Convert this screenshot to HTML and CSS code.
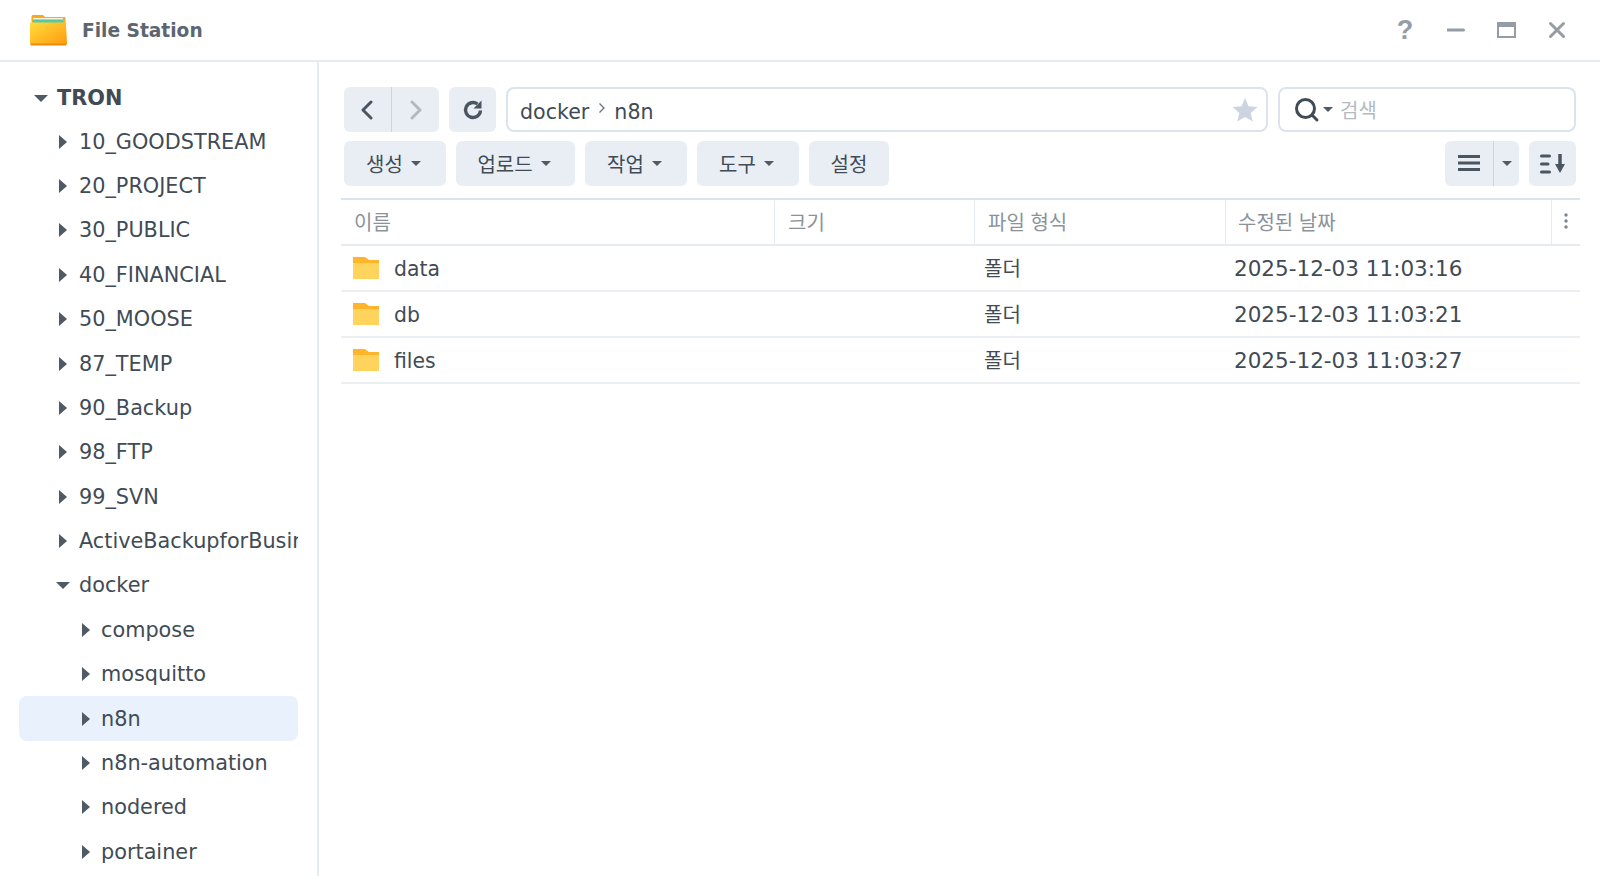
FILE: index.html
```html
<!DOCTYPE html>
<html lang="ko">
<head>
<meta charset="utf-8">
<title>File Station</title>
<link rel="stylesheet" href="styles.css">
</head>
<body>
<div class="window">
  <header class="titlebar">
    <svg class="app-icon" width="40" height="34" viewBox="0 0 40 34">
      <defs>
        <linearGradient id="fg" x1="0" y1="0" x2="1" y2="1"><stop offset="0" stop-color="#ffdc3c"/><stop offset="1" stop-color="#ff9a10"/></linearGradient>
      </defs>
      <path d="M2.500 3.500a1.500 1.500 0 0 1 1.500-1.500h10l2 2h19.500a1 1 0 0 1 1 1v6h-34z" fill="#f7a823"/>
      <rect x="4" y="5" width="30" height="1.600" fill="#fff6d8"/>
      <rect x="4" y="6.600" width="30" height="3.400" fill="#58c9a6"/>
      <path d="M1 10.500a1 1 0 0 1 1-1h34a1 1 0 0 1 1 1l1 19.500a2 2 0 0 1-2 2H3a2 2 0 0 1-2-2z" fill="url(#fg)"/>
      <rect x="1.500" y="30.500" width="36" height="1.500" fill="#e98b0d"/>
      <rect x="2" y="32" width="35" height="1" fill="#c9ccd0"/>
    </svg>
    <span class="app-title">File Station</span>
    <div class="win-controls">
      <span class="win-help">?</span>
      <svg width="20" height="20" viewBox="1 0 20 20"><rect x="0" y="8.500" width="19" height="3" rx="1.500" fill="#969ca5"/></svg>
      <svg width="20" height="20" viewBox="0 0 20 20"><path d="M1 3h17v14H1z" fill="none" stroke="#969ca5" stroke-width="2"/><rect x="1" y="2" width="17" height="5" fill="#969ca5"/></svg>
      <svg width="20" height="20" viewBox="0 0 20 20"><path d="M3.500 3.500l13 13M16.500 3.500l-13 13" stroke="#969ca5" stroke-width="3" stroke-linecap="round"/></svg>
    </div>
  </header>
  <div class="body">
    <aside class="sidebar">
      <div class="tree-row root"><i class="caret-down"></i><span class="tree-label">TRON</span></div>
      <div class="tree-row lvl1"><i class="caret-right"></i><span class="tree-label">10_GOODSTREAM</span></div>
      <div class="tree-row lvl1"><i class="caret-right"></i><span class="tree-label">20_PROJECT</span></div>
      <div class="tree-row lvl1"><i class="caret-right"></i><span class="tree-label">30_PUBLIC</span></div>
      <div class="tree-row lvl1"><i class="caret-right"></i><span class="tree-label">40_FINANCIAL</span></div>
      <div class="tree-row lvl1"><i class="caret-right"></i><span class="tree-label">50_MOOSE</span></div>
      <div class="tree-row lvl1"><i class="caret-right"></i><span class="tree-label">87_TEMP</span></div>
      <div class="tree-row lvl1"><i class="caret-right"></i><span class="tree-label">90_Backup</span></div>
      <div class="tree-row lvl1"><i class="caret-right"></i><span class="tree-label">98_FTP</span></div>
      <div class="tree-row lvl1"><i class="caret-right"></i><span class="tree-label">99_SVN</span></div>
      <div class="tree-row lvl1"><i class="caret-right"></i><span class="tree-label">ActiveBackupforBusiness</span></div>
      <div class="tree-row lvl1"><i class="caret-down"></i><span class="tree-label">docker</span></div>
      <div class="tree-row lvl2"><i class="caret-right"></i><span class="tree-label">compose</span></div>
      <div class="tree-row lvl2"><i class="caret-right"></i><span class="tree-label">mosquitto</span></div>
      <div class="tree-row lvl2 selected"><i class="caret-right"></i><span class="tree-label">n8n</span></div>
      <div class="tree-row lvl2"><i class="caret-right"></i><span class="tree-label">n8n-automation</span></div>
      <div class="tree-row lvl2"><i class="caret-right"></i><span class="tree-label">nodered</span></div>
      <div class="tree-row lvl2"><i class="caret-right"></i><span class="tree-label">portainer</span></div>
    </aside>
    <main class="content">
      <div class="nav-bar">
        <div class="btn-group nav-group">
          <button class="seg"><svg width="14" height="22" viewBox="1 0 14 22"><path d="M11 3L3 11l8 8" fill="none" stroke="#4a5560" stroke-width="3" stroke-linecap="round" stroke-linejoin="round"/></svg></button>
          <button class="seg"><svg width="14" height="22" viewBox="0 0 14 22"><path d="M3 3l8 8-8 8" fill="none" stroke="#b4b9bf" stroke-width="3" stroke-linecap="round" stroke-linejoin="round"/></svg></button>
        </div>
        <button class="btn refresh"><svg width="22" height="22" viewBox="0 0 22 22"><path d="M18.500 11.500A7.500 7.500 0 1 1 15.500 5" fill="none" stroke="#4a5560" stroke-width="3.400"/><path d="M19.500 1.500v8h-8z" fill="#4a5560"/></svg></button>
        <div class="path-box">
          <span class="crumb">docker</span>
          <svg class="crumb-sep" width="8" height="12" viewBox="0 0 8 12"><path d="M1.500 1.500L6 6l-4.500 4.500" fill="none" stroke="#6b7580" stroke-width="1.300"/></svg>
          <span class="crumb">n8n</span>
          <svg class="star" width="26" height="25" viewBox="0 0 26 25"><path d="M13 1l3.500 8.200 8.900.8-6.700 5.900 2 8.700L13 20.100l-7.700 4.500 2-8.700L.6 10l8.900-.8z" fill="#ccd5df"/></svg>
        </div>
        <div class="search-box">
          <svg width="26" height="26" viewBox="0 0 26 26"><circle cx="11.500" cy="11.500" r="9" fill="none" stroke="#414b55" stroke-width="3"/><path d="M18 18l5 5" stroke="#414b55" stroke-width="3" stroke-linecap="round"/></svg>
          <i class="caret-down small search-caret"></i>
          <span class="search-ph">검색</span>
        </div>
      </div>
      <div class="action-bar">
        <button class="btn act drop w102">생성<i class="caret-down small"></i></button>
        <button class="btn act drop w119">업로드<i class="caret-down small"></i></button>
        <button class="btn act drop w102">작업<i class="caret-down small"></i></button>
        <button class="btn act drop w102">도구<i class="caret-down small"></i></button>
        <button class="btn act w80">설정</button>
        <div class="spacer"></div>
        <div class="btn-group view-group">
          <button class="seg view-main"><svg class="bars" width="22" height="16" viewBox="0 0 22 16"><path d="M0 1.500h22M0 8h22M0 14.500h22" stroke="#4a5560" stroke-width="3"/></svg></button>
          <button class="seg view-drop"><i class="caret-down small"></i></button>
        </div>
        <button class="btn sort"><svg width="26" height="20" viewBox="0 0 26 20"><path d="M1.500 2h8M1.500 10h6.500M1.500 18h8" stroke="#4a5560" stroke-width="3" stroke-linecap="round"/><path d="M20 0v12" stroke="#4a5560" stroke-width="3.500"/><path d="M15 10h10L20 19z" fill="#4a5560"/></svg></button>
      </div>
      <div class="table">
        <div class="thead">
          <div class="th">이름</div>
          <div class="th">크기</div>
          <div class="th">파일 형식</div>
          <div class="th">수정된 날짜</div>
          <div class="th th-more"><svg width="4" height="16" viewBox="0 0 4 16"><circle cx="2" cy="2" r="1.700" fill="#7d858e"/><circle cx="2" cy="8" r="1.700" fill="#7d858e"/><circle cx="2" cy="14" r="1.700" fill="#7d858e"/></svg></div>
        </div>
        <div class="trow">
          <div class="td name"><svg class="folder" width="26" height="22" viewBox="0 0 26 22"><path d="M0 0h12l4 3h10v6H0z" fill="#ffb429"/><rect y="6" width="26" height="16" fill="#ffd35c"/></svg>data</div>
          <div class="td"></div><div class="td kind">폴더</div><div class="td date">2025-12-03 11:03:16</div><div class="td"></div>
        </div>
        <div class="trow">
          <div class="td name"><svg class="folder" width="26" height="22" viewBox="0 0 26 22"><path d="M0 0h12l4 3h10v6H0z" fill="#ffb429"/><rect y="6" width="26" height="16" fill="#ffd35c"/></svg>db</div>
          <div class="td"></div><div class="td kind">폴더</div><div class="td date">2025-12-03 11:03:21</div><div class="td"></div>
        </div>
        <div class="trow">
          <div class="td name"><svg class="folder" width="26" height="22" viewBox="0 0 26 22"><path d="M0 0h12l4 3h10v6H0z" fill="#ffb429"/><rect y="6" width="26" height="16" fill="#ffd35c"/></svg>files</div>
          <div class="td"></div><div class="td kind">폴더</div><div class="td date">2025-12-03 11:03:27</div><div class="td"></div>
        </div>
      </div>
    </main>
  </div>
</div>
</body>
</html>
```
FILE: styles.css
```css
* { box-sizing: border-box; }
html, body { margin: 0; height: 100%; }
body {
  background: #fff;
  color: #414b55;
  font-family: "DejaVu Sans", "Noto Sans CJK KR", sans-serif;
  font-size: 20.6px;
  overflow: hidden;
}
.window { width: 1600px; height: 876px; display: flex; flex-direction: column; overflow: hidden; }
.titlebar {
  height: 62px;
  flex: none;
  border-bottom: 2px solid #e6ebf1;
  display: flex;
  align-items: center;
  padding-left: 29px;
}
.app-icon { flex: none; }
.app-title { margin-left: 13px; font-size: 18.6px; font-weight: 700; color: #5c6670; }
.win-controls { margin-left: auto; display: flex; align-items: center; gap: 30px; padding-right: 33px; }
.win-help { width: 20px; margin-right: 2px; text-align: center; font-family: "Liberation Sans", sans-serif; font-size: 27px; font-weight: 700; color: #969ca5; line-height: 26px; }
.body { flex: 1; display: flex; min-height: 0; }
.sidebar {
  width: 319px;
  flex: none;
  border-right: 2px solid #e6ebf1;
  padding: 13px 0 0 19px;
  overflow: hidden;
}
.tree-row {
  width: 279px;
  height: 44.4px;
  display: flex;
  align-items: center;
  border-radius: 8px;
  white-space: nowrap;
  overflow: hidden;
}
.tree-label { font-size: 20.8px; }
.root .tree-label { font-weight: 700; }
.root { padding-left: 15px; padding-top: 2px; }
.lvl1 { padding-left: 40px; }
.lvl2 { padding-left: 63px; }
.lvl2 .caret-right { margin-right: 11px; }
.selected { background: #e8f1fc; }
.caret-right {
  flex: none;
  width: 0; height: 0;
  margin-right: 12px;
  border-top: 7px solid transparent;
  border-bottom: 7px solid transparent;
  border-left: 8px solid #4f5a65;
}
.caret-down {
  flex: none;
  width: 0; height: 0;
  margin-right: 9px;
  border-left: 7px solid transparent;
  border-right: 7px solid transparent;
  border-top: 7px solid #4f5a65;
}
.lvl1 .caret-down { margin-left: -3px; margin-right: 9px; }
.caret-down.small {
  margin: 0 0 0 8px;
  border-left-width: 5.5px;
  border-right-width: 5.5px;
  border-top-width: 5px;
}
.caret-down.search-caret { margin-left: 3px; }
.content { flex: 1; min-width: 0; padding: 25px 20px 0 25px; display: flex; flex-direction: column; }
.nav-bar { display: flex; gap: 10px; height: 45px; margin-right: 4px; }
.action-bar { display: flex; gap: 10px; height: 45px; margin-top: 9px; margin-right: 4px; }
.spacer { flex: 1; }
button { font: inherit; color: inherit; border: 0; padding: 0; }
.btn {
  background: #e9eef5;
  border-radius: 6px;
  display: flex;
  align-items: center;
  justify-content: center;
}
.btn-group { display: flex; background: #e9eef5; border-radius: 6px; }
.seg { background: none; display: flex; align-items: center; justify-content: center; }
.nav-group { width: 95px; }
.nav-group .seg { flex: 1; }
.nav-group .seg:first-child { border-right: 1px solid #cdd5de; }
.refresh { width: 47px; }
.path-box {
  width: 762px;
  border: 2px solid #dbe4ee;
  border-radius: 8px;
  display: flex;
  align-items: center;
  padding-left: 12px;
  padding-right: 8px;
}
.crumb { padding-top: 4px; }
.crumb-sep { margin: 0 8px 4px 9px; }
.star { margin-left: auto; }
.search-box {
  flex: 1;
  border: 2px solid #dbe4ee;
  border-radius: 8px;
  display: flex;
  align-items: center;
  padding-left: 14px;
}
.search-ph { margin-left: 7px; font-size: 20px; color: #b4bac1; font-family: "Noto Sans CJK KR", sans-serif; }
.act { font-size: 20px; color: #414b55; font-family: "Noto Sans CJK KR", sans-serif; }
.drop { padding-right: 3px; }
.w102 { width: 102px; }
.w119 { width: 119px; }
.w80 { width: 80px; }
.view-group { width: 74px; }
.view-main { width: 49px; border-right: 1px solid #cdd5de; }
.bars { margin-bottom: 2px; }
.view-drop { flex: 1; }
.view-drop .caret-down.small { margin: 0; }
.sort { width: 47px; }
.table { margin-left: -3px; margin-top: 12px; border-top: 2px solid #dbe4ee; }
.thead, .trow {
  display: grid;
  grid-template-columns: 434px 200px 251px 326px 28px;
  height: 46px;
}
.thead { border-bottom: 2px solid #e6ebf1; }
.trow { border-bottom: 2px solid #ebeff4; }
.th {
  display: flex;
  align-items: center;
  padding: 0 0 2px 13px;
  font-size: 20px;
  color: #8b929a;
  border-right: 1px solid #e6ebf1;
  font-family: "Noto Sans CJK KR", sans-serif;
}
.th:nth-child(4) { padding-left: 12px; }
.th-more { border-right: 0; padding: 0 0 2px 12px; }
.td { display: flex; align-items: center; padding-left: 9px; font-size: 20.4px; white-space: nowrap; }
.name { padding-left: 12px; padding-top: 1px; }
.folder { margin-right: 15px; flex: none; margin-top: -1px; }
.kind { font-size: 20px; font-family: "Noto Sans CJK KR", sans-serif; padding-bottom: 2px; }
.date { font-size: 21.5px; padding: 1px 0 0 8px; }
```
